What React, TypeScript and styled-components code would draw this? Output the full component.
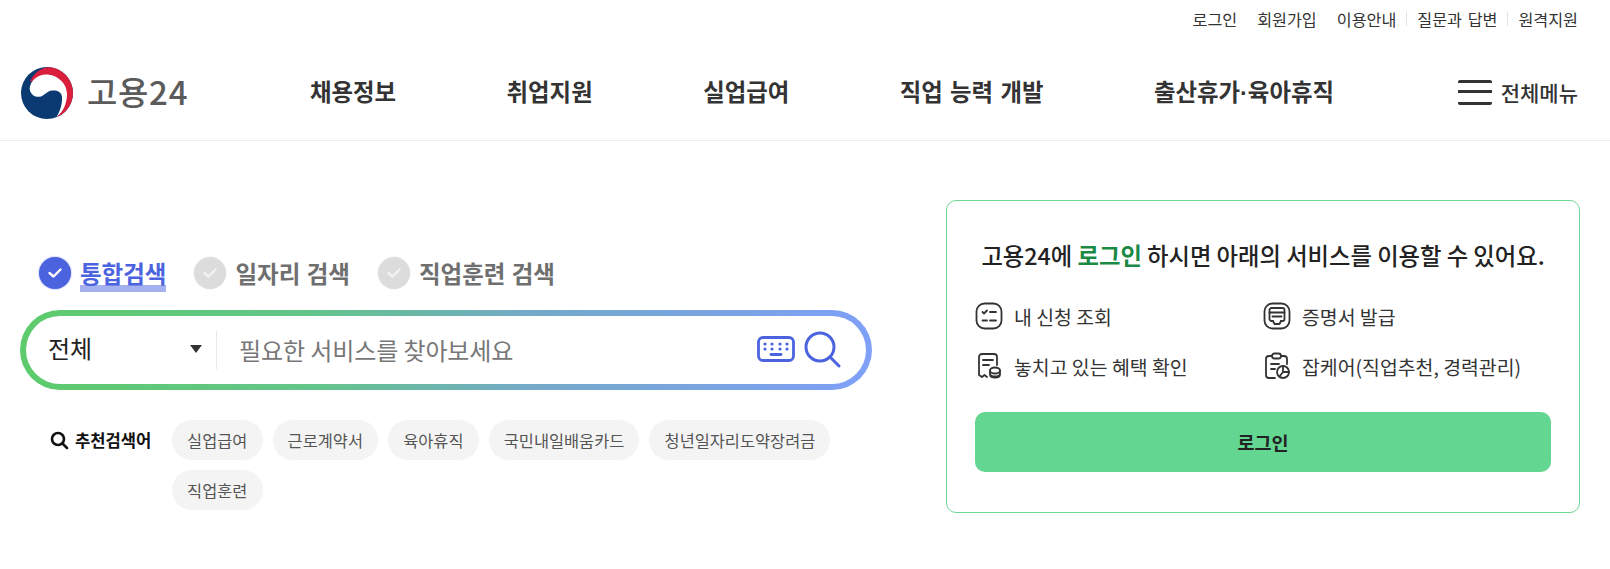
import React from "react";
import styled, { createGlobalStyle } from "styled-components";

const Global = createGlobalStyle`
  html, body { margin: 0; padding: 0; background: #fff; }
  body { font-family: "Noto Sans CJK KR", "Noto Sans", sans-serif; color: #222; }
  * { box-sizing: border-box; }
`;

const Page = styled.div`
  width: 1610px;
  height: 569px;
  overflow: hidden;
`;

const TopBar = styled.div`
  height: 40px;
  padding: 0 32px 3px 0;
  display: flex;
  justify-content: flex-end;
  align-items: center;
  font-size: 16.200px;
  word-spacing: 2px;
  color: #333;
`;

const TopLink = styled.span<{ $divided?: boolean }>`
  display: flex;
  align-items: center;
  line-height: 20px;
  margin-left: ${(p) => (p.$divided ? "10px" : "20px")};
  &::before {
    content: "";
    display: ${(p) => (p.$divided ? "block" : "none")};
    width: 1px;
    height: 14px;
    margin-right: 10px;
    background: #e2e2e2;
  }
`;

const Header = styled.header`
  height: 101px;
  border-bottom: 1px solid #ececec;
  padding: 0 32px 0 20px;
  display: flex;
  align-items: center;
`;

const Logo = styled.div`
  display: flex;
  align-items: center;
  gap: 13px;
  width: 290px;
  flex: none;
  padding-top: 6px;
`;

const LogoText = styled.span`
  font-size: 33px;
  font-weight: 500;
  color: #5b5b5b;
  line-height: 1;
  letter-spacing: 0.700px;
  margin-top: -4px;
`;

const Nav = styled.nav`
  display: flex;
  gap: 110.500px;
  flex: 1;
  padding-top: 4px;
`;

const NavItem = styled.span`
  font-size: 23.400px;
  font-weight: 700;
  color: #333;
  line-height: 30px;
  white-space: nowrap;
  word-spacing: 2px;
`;

const NavDot = styled.span`
  font-family: "Liberation Sans", sans-serif;
`;

const FullMenu = styled.div`
  display: flex;
  align-items: center;
  gap: 9px;
  padding-top: 4px;
  font-size: 21px;
  font-weight: 500;
  color: #333;
`;

const Burger = styled.span`
  display: block;
  width: 34px;
  height: 25px;
  border-top: 3.500px solid #333;
  border-bottom: 3.500px solid #333;
  border-radius: 2px;
  position: relative;
  &::after {
    content: "";
    position: absolute;
    left: 0;
    right: 0;
    top: 7px;
    height: 3.500px;
    background: #333;
  }
`;

const Main = styled.main`
  display: flex;
  padding: 59px 30px 0 20px;
  justify-content: space-between;
`;

const SearchColumn = styled.section`
  width: 852px;
  padding-top: 54px;
`;

const Scopes = styled.div`
  display: flex;
  align-items: center;
  padding-left: 19px;
  gap: 28px;
  height: 38px;
  margin-bottom: 18px;
`;

const Scope = styled.div`
  display: flex;
  align-items: center;
  gap: 9px;
`;

const Check = styled.span<{ $on?: boolean }>`
  width: 32px;
  height: 32px;
  border-radius: 50%;
  background: ${(p) => (p.$on ? "#4c63e0" : "#dcdcdc")};
  box-shadow: 0 0 2px ${(p) => (p.$on ? "#8c9bec" : "#e8e8e8")};
  display: flex;
  align-items: center;
  justify-content: center;
`;

const ScopeLabel = styled.span<{ $on?: boolean }>`
  font-size: 23.500px;
  font-weight: 700;
  line-height: 32px;
  word-spacing: 1px;
  padding-bottom: 3px;
  margin-bottom: -3px;
  color: ${(p) => (p.$on ? "#4c63e0" : "#6f6f6f")};
  background: ${(p) =>
    p.$on ? "linear-gradient(transparent 28px, #a5b1ef 28px)" : "none"};
`;

const SearchBox = styled.div`
  height: 80px;
  border-radius: 40px;
  padding: 6px;
  background: linear-gradient(90deg, #5dcb6c 0%, #63c48b 35%, #74a9c8 60%, #7fa0f8 100%);
`;

const SearchInner = styled.div`
  height: 100%;
  border-radius: 34px;
  background: #fff;
  display: flex;
  align-items: center;
  padding: 0 25px 0 22px;
`;

const ScopeSelect = styled.div`
  width: 169px;
  height: 38px;
  border-right: 1px solid #e8e8e8;
  padding: 0 14px 5px 0;
  display: flex;
  align-items: center;
  justify-content: space-between;
  font-size: 24px;
  color: #222;
`;

const Caret = styled.span`
  width: 0;
  height: 0;
  margin-top: 3px;
  border-left: 6px solid transparent;
  border-right: 6px solid transparent;
  border-top: 8px solid #333;
`;

const Placeholder = styled.span`
  flex: 1;
  padding: 0 0 2px 22px;
  font-size: 24px;
  letter-spacing: -0.100px;
  color: #777;
`;

const SearchIcons = styled.div`
  display: flex;
  align-items: center;
  gap: 9px;
  padding-bottom: 2px;
`;

const Keywords = styled.div`
  display: flex;
  padding: 30px 0 0 30px;
  align-items: flex-start;
`;

const KeywordTitle = styled.div`
  display: flex;
  align-items: center;
  gap: 6px;
  width: 122px;
  height: 40px;
  flex: none;
  font-size: 16.600px;
  font-weight: 700;
  color: #111;
  white-space: nowrap;
`;

const Chips = styled.div`
  display: flex;
  flex-wrap: wrap;
  gap: 10px;
  width: 680px;
`;

const Chip = styled.span`
  height: 40px;
  padding: 0 15.100px;
  border-radius: 20px;
  background: #f4f4f4;
  font-size: 16.400px;
  color: #555;
  display: flex;
  align-items: center;
`;

const LoginCard = styled.aside`
  width: 634px;
  height: 313px;
  border: 1px solid #6fd594;
  border-radius: 10px;
  padding: 38px 28px 0;
`;

const CardTitle = styled.h2`
  margin: 0 0 31px;
  text-align: center;
  font-size: 23.300px;
  font-weight: 500;
  line-height: 32px;
  color: #222;
  white-space: nowrap;
`;

const Accent = styled.strong`
  font-weight: 700;
  color: #1a8a45;
`;

const Services = styled.ul`
  list-style: none;
  margin: 0 0 32px;
  padding: 0;
  display: grid;
  grid-template-columns: 288px 1fr;
  row-gap: 22px;
`;

const Service = styled.li`
  display: flex;
  align-items: center;
  gap: 11px;
  height: 28px;
  font-size: 19.400px;
  color: #333;
  white-space: nowrap;
`;

const LoginButton = styled.button`
  display: block;
  width: 100%;
  height: 60px;
  border: 0;
  border-radius: 10px;
  background: #63d691;
  font: 700 18.500px "Noto Sans CJK KR", sans-serif;
  color: #222;
`;

const CheckMark = ({ on }: { on?: boolean }) => (
  <svg width="16" height="12" viewBox="0 0 16 12" fill="none">
    <path d="M2.500 6l4 3.500L13.500 2.500" stroke={on ? "#fff" : "#f2f2f2"} strokeWidth="2.400" strokeLinecap="round" strokeLinejoin="round" />
  </svg>
);

const Emblem = () => (
  <svg width="54" height="54" viewBox="0 0 54 54">
    <circle cx="27" cy="27" r="26" fill="#0b3a72" />
    <path d="M10 16C13 7 22 1 30 1.200A26 26 0 0 1 36.500 51.200C43 46 46 38 46 30C46 20 36 12 24 13C17 13 13 15 10 16Z" fill="#d91f3c" />
    <path d="M9.700 22C10.500 15 17 8.500 26 8.500C37 8.500 47 17 47 28C47 38 43 46 36.500 51.200C40 45 42.500 38 42 31C41.500 25 36 24 32 24.500C27 25 25 29 21 30.500C15 32 9.500 28 9.700 22Z" fill="#fff" />
  </svg>
);

const KeyboardIcon = () => (
  <svg width="38" height="26" viewBox="0 0 38 26" fill="none">
    <rect x="1.500" y="1.500" width="35" height="23" rx="4.500" stroke="#4c63e0" strokeWidth="2.800" />
    {[8, 15, 23, 30].map((x) => (
      <React.Fragment key={x}>
        <circle cx={x} cy="8" r="1.600" fill="#4c63e0" />
        <circle cx={x} cy="13" r="1.600" fill="#4c63e0" />
      </React.Fragment>
    ))}
    <path d="M14 18.500h10" stroke="#4c63e0" strokeWidth="2.800" strokeLinecap="round" />
  </svg>
);

const MagnifierIcon = () => (
  <svg width="37" height="37" viewBox="0 0 37 37" fill="none">
    <circle cx="16" cy="16" r="14" stroke="#4c63e0" strokeWidth="3" />
    <path d="M26 26l9 9" stroke="#4c63e0" strokeWidth="3" strokeLinecap="round" />
  </svg>
);

const SmallSearch = () => (
  <svg width="19" height="19" viewBox="0 0 19 19" fill="none">
    <circle cx="8" cy="8" r="6" stroke="#111" strokeWidth="2.600" />
    <path d="M12.500 12.500L17 17" stroke="#111" strokeWidth="2.600" strokeLinecap="round" />
  </svg>
);

const ListIcon = () => (
  <svg width="28" height="28" viewBox="0 0 28 28" fill="none" stroke="#333" strokeWidth="1.800" strokeLinecap="round" strokeLinejoin="round">
    <rect x="1.500" y="1.500" width="25" height="25" rx="8" />
    <path d="M7.500 10l1.500 1.500L12 8.500M15 10h6M7.500 18.500h4.500M15 18.500h6" />
  </svg>
);

const CertIcon = () => (
  <svg width="28" height="28" viewBox="0 0 28 28" fill="none" stroke="#333" strokeWidth="1.800" strokeLinecap="round" strokeLinejoin="round">
    <rect x="1.500" y="1.500" width="25" height="25" rx="8" />
    <path d="M10 19H8.500a2 2 0 0 1-2-2V8a2 2 0 0 1 2-2h11a2 2 0 0 1 2 2v9a2 2 0 0 1-2 2H18" />
    <path d="M6.500 10.500h15M9.500 14.500h9M10 19l1.500 3h5l1.500-3" />
  </svg>
);

const BenefitIcon = () => (
  <svg width="28" height="28" viewBox="0 0 28 28" fill="none" stroke="#333" strokeWidth="1.800" strokeLinecap="round" strokeLinejoin="round">
    <path d="M12 25l-2.500-2-2.500 2-3-2V5a3 3 0 0 1 3-3h12a3 3 0 0 1 3 3v8" />
    <path d="M8 8h10M8 13h6" />
    <ellipse cx="20" cy="18.500" rx="5" ry="3" />
    <path d="M15 18.500v4c0 1.700 2.200 3 5 3s5-1.300 5-3v-4M15 21.500c0 1.700 2.200 3 5 3s5-1.300 5-3" />
  </svg>
);

const CareIcon = () => (
  <svg width="28" height="28" viewBox="0 0 28 28" fill="none" stroke="#333" strokeWidth="1.800" strokeLinecap="round" strokeLinejoin="round">
    <path d="M9 4H6a3 3 0 0 0-3 3v16a3 3 0 0 0 3 3h6M18 4h3a3 3 0 0 1 3 3v5" />
    <rect x="9" y="1.500" width="9" height="5" rx="2.500" />
    <path d="M8 12h8M8 17h4" />
    <circle cx="20" cy="20" r="6" />
    <path d="M20 14v6h6M20 20l-3.500 4.500" />
  </svg>
);

const navItems = ["채용정보", "취업지원", "실업급여", "직업 능력 개발"];
const keywords = ["실업급여", "근로계약서", "육아휴직", "국민내일배움카드", "청년일자리도약장려금", "직업훈련"];

export default function App() {
  return (
    <Page>
      <Global />
      <TopBar>
        <TopLink>로그인</TopLink>
        <TopLink>회원가입</TopLink>
        <TopLink>이용안내</TopLink>
        <TopLink $divided>질문과 답변</TopLink>
        <TopLink $divided>원격지원</TopLink>
      </TopBar>
      <Header>
        <Logo>
          <Emblem />
          <LogoText>고용24</LogoText>
        </Logo>
        <Nav>
          {navItems.map((item) => (
            <NavItem key={item}>{item}</NavItem>
          ))}
          <NavItem>
            출산휴가<NavDot>·</NavDot>육아휴직
          </NavItem>
        </Nav>
        <FullMenu>
          <Burger />
          전체메뉴
        </FullMenu>
      </Header>
      <Main>
        <SearchColumn>
          <Scopes>
            <Scope>
              <Check $on><CheckMark on /></Check>
              <ScopeLabel $on>통합검색</ScopeLabel>
            </Scope>
            <Scope>
              <Check><CheckMark /></Check>
              <ScopeLabel>일자리 검색</ScopeLabel>
            </Scope>
            <Scope>
              <Check><CheckMark /></Check>
              <ScopeLabel>직업훈련 검색</ScopeLabel>
            </Scope>
          </Scopes>
          <SearchBox>
            <SearchInner>
              <ScopeSelect>
                전체
                <Caret />
              </ScopeSelect>
              <Placeholder>필요한 서비스를 찾아보세요</Placeholder>
              <SearchIcons>
                <KeyboardIcon />
                <MagnifierIcon />
              </SearchIcons>
            </SearchInner>
          </SearchBox>
          <Keywords>
            <KeywordTitle>
              <SmallSearch />
              추천검색어
            </KeywordTitle>
            <Chips>
              {keywords.map((k) => (
                <Chip key={k}>{k}</Chip>
              ))}
            </Chips>
          </Keywords>
        </SearchColumn>
        <LoginCard>
          <CardTitle>
            고용24에 <Accent>로그인</Accent> 하시면 아래의 서비스를 이용할 수 있어요.
          </CardTitle>
          <Services>
            <Service><ListIcon />내 신청 조회</Service>
            <Service><CertIcon />증명서 발급</Service>
            <Service><BenefitIcon />놓치고 있는 혜택 확인</Service>
            <Service><CareIcon />잡케어(직업추천, 경력관리)</Service>
          </Services>
          <LoginButton>로그인</LoginButton>
        </LoginCard>
      </Main>
    </Page>
  );
}
